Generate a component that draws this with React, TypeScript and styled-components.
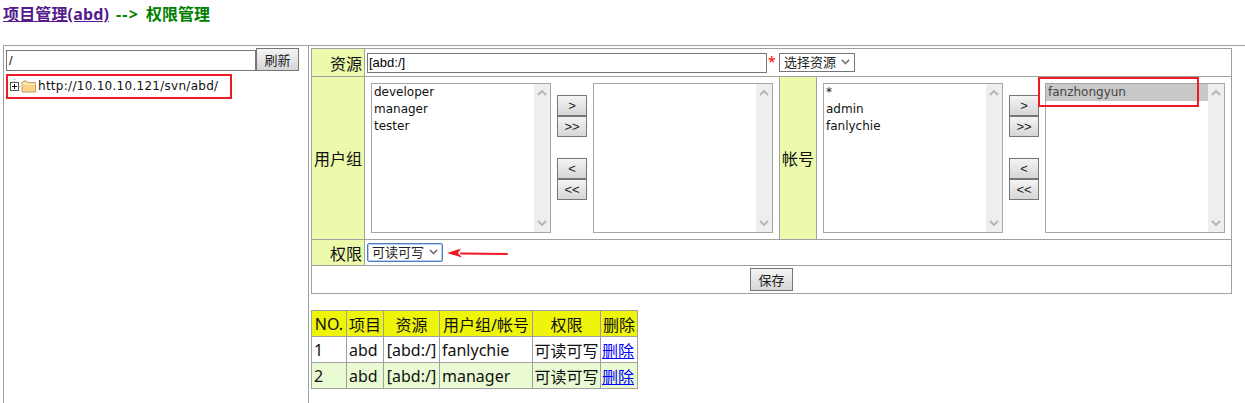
import styled, { createGlobalStyle } from 'styled-components';

const CJK = `"Noto Sans", "Noto Sans CJK SC", sans-serif`;
const UI = `"DejaVu Sans", "Noto Sans CJK SC", sans-serif`;
const FIELD = `"Liberation Sans", "Noto Sans CJK SC", sans-serif`;

const GlobalStyle = createGlobalStyle`
  html, body { margin: 0; padding: 0; background: #fff; }
  body { font-family: ${CJK}; font-size: 16px; color: #000; overflow: hidden; height: 403px; }
`;

const Title = styled.div`
  height: 46px;
  box-sizing: border-box;
  margin-left: 3px;
  padding-top: 3px;
  font-size: 16px;
  font-weight: 700;
  line-height: 22px;
  color: #008000;
  border-bottom: 1px solid #a0a0a0;
`;

const TitleLink = styled.a`
  color: #551a8b;
  text-decoration: underline;
  letter-spacing: 0.15px;
`;

const Arrow = styled.span`
  margin: 0 7px;
  letter-spacing: 1.2px;
`;

const Columns = styled.div`
  display: flex;
  height: 357px;
  margin-left: 3px;
`;

const LeftPane = styled.div`
  width: 306px;
  box-sizing: border-box;
  border-left: 1px solid #a0a0a0;
  border-right: 1px solid #a0a0a0;
  padding: 2px 0 0 2px;
`;

const PathRow = styled.div`
  display: flex;
  align-items: flex-end;
`;

const PathInput = styled.div`
  width: 250px;
  height: 21px;
  box-sizing: border-box;
  border: 1px solid #767676;
  font: 13px/19px ${FIELD};
  padding-left: 2px;
  color: #111;
`;

const Button = styled.div<{ $w: number; $h: number }>`
  width: ${p => p.$w}px;
  height: ${p => p.$h}px;
  box-sizing: border-box;
  border: 1px solid #767676;
  background: linear-gradient(#f4f4f4, #d6d6d6);
  display: flex;
  align-items: center;
  justify-content: center;
  font: 13px ${FIELD};
  color: #222;
`;

const TreeBox = styled.div`
  width: 226px;
  height: 25px;
  box-sizing: border-box;
  margin-top: 3px;
  border: 2px solid #ed1c24;
  display: flex;
  align-items: center;
  padding: 0 0 2px 1px;
`;

const TreeText = styled.span`
  font: 12px ${UI};
  margin-left: 1px;
  letter-spacing: 0.28px;
  color: #111;
`;

const RightPane = styled.div`
  flex: 1;
  padding: 2px 0 0 2px;
`;

const FormTable = styled.table`
  border-collapse: collapse;
  table-layout: fixed;
  width: 921px;
  td { border: 1px solid #a0a0a0; padding: 0; }
`;

const Label = styled.td<{ $center?: boolean }>`
  background: #ebfaab;
  text-align: ${p => (p.$center ? 'center' : 'right')};
  padding-right: ${p => (p.$center ? '0' : '2px')} !important;
  font-size: 16px;
  color: #111;
`;

const FieldRow = styled.div`
  display: flex;
  align-items: center;
  padding-left: 2px;
`;

const ResourceInput = styled.div`
  width: 400px;
  height: 20px;
  box-sizing: border-box;
  border: 1px solid #767676;
  font: 13px/18px ${FIELD};
  padding-left: 1px;
`;

const Star = styled.span`
  color: #f00;
  font-size: 14px;
  width: 12px;
  height: 18px;
  text-align: left;
  padding-left: 1px;
  box-sizing: border-box;
  line-height: 16px;
`;

const Dropdown = styled.div<{ $focus?: boolean }>`
  width: 76px;
  height: 19px;
  box-sizing: border-box;
  border: 1px solid ${p => (p.$focus ? '#4a7fc8' : '#767676')};
  border-radius: ${p => (p.$focus ? '2px' : '0')};
  box-shadow: ${p => (p.$focus ? '0 0 0 1px #b7cdea inset' : 'none')};
  display: flex;
  align-items: center;
  justify-content: space-between;
  padding: 0 4px 0 4px;
  font-size: 13px;
  color: #222;
  line-height: 17px;
`;

const Pickers = styled.div`
  display: flex;
  align-items: flex-start;
  height: 150px;
  padding: 0 0 0 6px;
`;

const ListBox = styled.div`
  position: relative;
  width: 180px;
  height: 150px;
  box-sizing: border-box;
  border: 1px solid #a6a6a6;
  display: flex;
`;

const ListItems = styled.div`
  flex: 1;
  min-width: 0;
`;

const ListItem = styled.div<{ $selected?: boolean }>`
  height: 17px;
  font: 12px/17px ${UI};
  padding-left: 2px;
  color: ${p => (p.$selected ? '#444' : '#111')};
  background: ${p => (p.$selected ? '#c8c8c8' : 'transparent')};
`;

const ScrollTrack = styled.div`
  width: 16px;
  background: #eeeeee;
  display: flex;
  flex-direction: column;
  justify-content: space-between;
  align-items: center;
  padding: 5px 0;
`;

const MoveButtons = styled.div`
  width: 30px;
  margin: 12px 6px 0;
  display: flex;
  flex-direction: column;
  gap: 21px;
`;

const MoveGroup = styled.div`
  display: flex;
  flex-direction: column;
`;

const Highlight = styled.div`
  position: absolute;
  left: -8px;
  top: -7px;
  width: 161px;
  height: 30px;
  border: 2px solid #ed1c24;
  box-sizing: border-box;
`;

const SaveCell = styled.div`
  display: flex;
  justify-content: center;
`;

const PermRow = styled(FieldRow)`
  gap: 4px;
`;

const ResultTable = styled.table`
  margin-top: 16px;
  border-collapse: collapse;
  table-layout: fixed;
  width: 327px;
  font-size: 16px;
  td, th { border: 1px solid #a0a0a0; padding: 0; height: 25px; font-weight: 400; white-space: nowrap; }
`;

const HeadCell = styled.th`
  background: #eef40a;
  font-size: 16px;
  color: #111;
`;

const DataRow = styled.tr<{ $alt?: boolean }>`
  background: ${p => (p.$alt ? '#eafbd3' : '#fff')};
`;

const DataCell = styled.td<{ $center?: boolean }>`
  text-align: ${p => (p.$center ? 'center' : 'left')};
  padding-left: ${p => (p.$center ? '0' : '2px')} !important;
  font-size: 16px;
  color: #111;
`;

const DeleteCell = styled.td`
  padding-left: 1px !important;
`;

const DeleteLink = styled.a`
  color: #00f;
  text-decoration: underline;
  font-size: 16px;
`;

const Chevron = ({ up, color = '#b4b4b4', size = 10 }: { up?: boolean; color?: string; size?: number }) => (
  <svg width={size} height={size * 0.7} viewBox="0 0 10 7">
    <path d={up ? 'M1 6 5 2l4 4' : 'M1 1l4 4 4-4'} fill="none" stroke={color} strokeWidth="1.8" />
  </svg>
);

const FolderIcon = () => (
  <svg width="16" height="14" viewBox="0 0 16 14">
    <path d="M1 3.5 2.5 2h3L7 3.5h7.5V13H1z" fill="#fbd48a" stroke="#b8a06a" strokeWidth="1" />
    <path d="M1.5 5h13" stroke="#fff1c8" strokeWidth="1" />
  </svg>
);

const PlusIcon = () => (
  <svg width="12" height="14" viewBox="0 0 12 14">
    <rect x="1.5" y="3.5" width="8" height="8" fill="#fff" stroke="#555" />
    <path d="M3 7.5h5M5.5 5v5" stroke="#111" />
    <path d="M10 7.5h2M5.5 0v3" stroke="#999" strokeDasharray="1 1" />
  </svg>
);

const RedArrow = () => (
  <svg width="62" height="12" viewBox="0 0 62 12">
    <path d="M60 7 14 6.4" stroke="#ed1c24" strokeWidth="2" strokeLinecap="round" />
    <path d="M0 6 14 1.5 11 6l4 4.5z" fill="#ed1c24" />
  </svg>
);

const Picker = ({ items, selected, mark }: { items: string[]; selected?: string; mark?: boolean }) => (
  <ListBox>
    <ListItems>
      {items.map(item => (
        <ListItem key={item} $selected={item === selected}>
          {item}
        </ListItem>
      ))}
    </ListItems>
    <ScrollTrack>
      <Chevron up />
      <Chevron />
    </ScrollTrack>
    {mark && <Highlight />}
  </ListBox>
);

const Movers = () => (
  <MoveButtons>
    <MoveGroup>
      <Button $w={30} $h={21}>&gt;</Button>
      <Button $w={30} $h={21}>&gt;&gt;</Button>
    </MoveGroup>
    <MoveGroup>
      <Button $w={30} $h={21}>&lt;</Button>
      <Button $w={30} $h={21}>&lt;&lt;</Button>
    </MoveGroup>
  </MoveButtons>
);

const grants = [
  { no: 1, user: 'fanlychie' },
  { no: 2, user: 'manager' },
];

const App = () => (
  <>
    <GlobalStyle />
    <Title>
      <TitleLink>项目管理(abd)</TitleLink>
      <Arrow>--&gt;</Arrow>权限管理
    </Title>
    <Columns>
      <LeftPane>
        <PathRow>
          <PathInput>/</PathInput>
          <Button $w={43} $h={23}>刷新</Button>
        </PathRow>
        <TreeBox>
          <PlusIcon />
          <FolderIcon />
          <TreeText>http://10.10.10.121/svn/abd/</TreeText>
        </TreeBox>
      </LeftPane>
      <RightPane>
        <FormTable>
          <colgroup>
            <col style={{ width: 53 }} />
            <col style={{ width: 415 }} />
            <col style={{ width: 37 }} />
            <col />
          </colgroup>
          <tbody>
            <tr style={{ height: 28 }}>
              <Label>资源</Label>
              <td colSpan={3}>
                <FieldRow>
                  <ResourceInput>[abd:/]</ResourceInput>
                  <Star>*</Star>
                  <Dropdown>选择资源<Chevron color="#777" size={9} /></Dropdown>
                </FieldRow>
              </td>
            </tr>
            <tr style={{ height: 163 }}>
              <Label>用户组</Label>
              <td>
                <Pickers>
                  <Picker items={['developer', 'manager', 'tester']} />
                  <Movers />
                  <Picker items={[]} />
                </Pickers>
              </td>
              <Label $center>帐号</Label>
              <td>
                <Pickers>
                  <Picker items={['*', 'admin', 'fanlychie']} />
                  <Movers />
                  <Picker items={['fanzhongyun']} selected="fanzhongyun" mark />
                </Pickers>
              </td>
            </tr>
            <tr style={{ height: 26 }}>
              <Label>权限</Label>
              <td colSpan={3}>
                <PermRow>
                  <Dropdown $focus>可读可写<Chevron color="#777" size={9} /></Dropdown>
                  <RedArrow />
                </PermRow>
              </td>
            </tr>
            <tr style={{ height: 28 }}>
              <td colSpan={4}>
                <SaveCell>
                  <Button $w={43} $h={23}>保存</Button>
                </SaveCell>
              </td>
            </tr>
          </tbody>
        </FormTable>
        <ResultTable>
          <colgroup>
            <col style={{ width: 35 }} />
            <col style={{ width: 37 }} />
            <col style={{ width: 56 }} />
            <col style={{ width: 93 }} />
            <col style={{ width: 68 }} />
            <col />
          </colgroup>
          <tbody>
            <tr>
              <HeadCell>NO.</HeadCell>
              <HeadCell>项目</HeadCell>
              <HeadCell>资源</HeadCell>
              <HeadCell>用户组/帐号</HeadCell>
              <HeadCell>权限</HeadCell>
              <HeadCell>删除</HeadCell>
            </tr>
            {grants.map(g => (
              <DataRow key={g.no} $alt={g.no % 2 === 0}>
                <DataCell>{g.no}</DataCell>
                <DataCell>abd</DataCell>
                <DataCell $center>[abd:/]</DataCell>
                <DataCell>{g.user}</DataCell>
                <DataCell $center>可读可写</DataCell>
                <DeleteCell><DeleteLink href="#">删除</DeleteLink></DeleteCell>
              </DataRow>
            ))}
          </tbody>
        </ResultTable>
      </RightPane>
    </Columns>
  </>
);

export default App;
